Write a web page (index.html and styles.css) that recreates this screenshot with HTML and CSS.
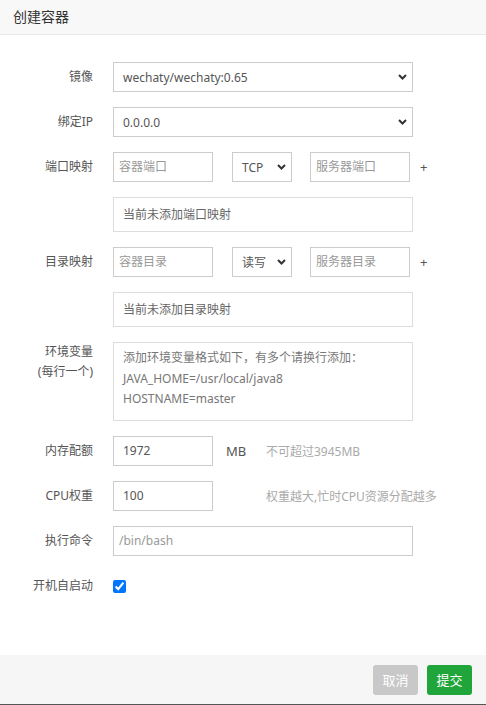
FILE: index.html
```html
<!DOCTYPE html>
<html lang="zh">
<head>
<meta charset="utf-8">
<title>创建容器</title>
<link rel="stylesheet" href="styles.css">
</head>
<body>
<div class="dialog">
  <div class="dialog-header">创建容器</div>
  <div class="dialog-body">
    <div class="row">
      <label class="label">镜像</label>
      <div class="select wide"><span>wechaty/wechaty:0.65</span><svg class="chev" width="9" height="6" viewBox="0 0 9 6"><path d="M1 1l3.5 3.5L8 1" fill="none" stroke="#333" stroke-width="2"/></svg></div>
    </div>
    <div class="row">
      <label class="label">绑定IP</label>
      <div class="select wide"><span>0.0.0.0</span><svg class="chev" width="9" height="6" viewBox="0 0 9 6"><path d="M1 1l3.5 3.5L8 1" fill="none" stroke="#333" stroke-width="2"/></svg></div>
    </div>
    <div class="row">
      <label class="label">端口映射</label>
      <div class="inline">
        <div class="input small placeholder">容器端口</div>
        <div class="select tiny"><span>TCP</span><svg class="chev" width="9" height="6" viewBox="0 0 9 6"><path d="M1 1l3.5 3.5L8 1" fill="none" stroke="#333" stroke-width="2"/></svg></div>
        <div class="input small placeholder">服务器端口</div>
        <span class="plus">+</span>
      </div>
    </div>
    <div class="row">
      <span class="label"></span>
      <div class="empty-box">当前未添加端口映射</div>
    </div>
    <div class="row">
      <label class="label">目录映射</label>
      <div class="inline">
        <div class="input small placeholder">容器目录</div>
        <div class="select tiny"><span>读写</span><svg class="chev" width="9" height="6" viewBox="0 0 9 6"><path d="M1 1l3.5 3.5L8 1" fill="none" stroke="#333" stroke-width="2"/></svg></div>
        <div class="input small placeholder">服务器目录</div>
        <span class="plus">+</span>
      </div>
    </div>
    <div class="row">
      <span class="label"></span>
      <div class="empty-box">当前未添加目录映射</div>
    </div>
    <div class="row top">
      <label class="label two">环境变量<br>(每行一个)</label>
      <div class="textarea">添加环境变量格式如下，有多个请换行添加：<br>JAVA_HOME=/usr/local/java8<br>HOSTNAME=master</div>
    </div>
    <div class="row">
      <label class="label">内存配额</label>
      <div class="inline">
        <div class="input small">1972</div>
        <span class="unit">MB</span>
        <span class="note">不可超过3945MB</span>
      </div>
    </div>
    <div class="row">
      <label class="label">CPU权重</label>
      <div class="inline">
        <div class="input small">100</div>
        <span class="unit"></span>
        <span class="note">权重越大,忙时CPU资源分配越多</span>
      </div>
    </div>
    <div class="row">
      <label class="label">执行命令</label>
      <div class="input wide placeholder">/bin/bash</div>
    </div>
    <div class="row check-row">
      <label class="label">开机自启动</label>
      <input class="check" type="checkbox" checked>
    </div>
  </div>
  <div class="dialog-footer">
    <button class="btn btn-cancel">取消</button>
    <button class="btn btn-submit">提交</button>
  </div>
</div>
</body>
</html>
```

FILE: styles.css
```css
html, body {
  margin: 0;
  padding: 0;
  background: #fff;
}
body {
  font-family: "Noto Sans", "Noto Sans CJK SC", sans-serif;
  font-size: 12px;
  color: #333;
}
.dialog {
  width: 486px;
  height: 705px;
  display: flex;
  flex-direction: column;
  box-sizing: border-box;
  border-bottom: 1px solid #555;
}
.dialog-header {
  height: 34px;
  line-height: 34px;
  padding-left: 13px;
  font-size: 14px;
  color: #333;
  background: #f8f8f8;
  border-bottom: 1px solid #e8e8e8;
  flex: none;
}
.dialog-body {
  flex: 1;
  padding-top: 27px;
  display: flex;
  flex-direction: column;
  gap: 15px;
}
.row {
  display: flex;
  align-items: center;
}
.row.top {
  align-items: flex-start;
}
.label {
  width: 93px;
  margin-right: 20px;
  text-align: right;
  color: #555;
  flex: none;
  line-height: 20px;
}
.label.two {
  padding-top: 0px;
}
.select, .input, .textarea, .empty-box {
  box-sizing: border-box;
  border: 1px solid #ccc;
  background: #fff;
  color: #555;
}
.select {
  height: 30px;
  display: flex;
  align-items: center;
  justify-content: space-between;
  padding: 0 5px 0 9px;
}
.select.wide {
  width: 300px;
  padding-right: 5px;
}
.select.tiny {
  width: 60px;
  margin-left: 19px;
  margin-right: 18px;
}
.chev {
  display: block;
}
.input {
  height: 30px;
  line-height: 28px;
  padding: 0 9px;
}
.input.small {
  width: 100px;
  padding-left: 5px;
}
.input.wide {
  width: 300px;
  padding-left: 5px;
}
.input.small:not(.placeholder) {
  padding-left: 9px;
}
.placeholder {
  color: #999;
}
.inline {
  display: flex;
  align-items: center;
}
.plus {
  margin-left: 10px;
  color: #555;
  font-size: 13px;
}
.empty-box {
  width: 300px;
  height: 35px;
  line-height: 33px;
  padding-left: 9px;
  border-color: #ddd;
  color: #666;
}
.textarea {
  width: 300px;
  height: 79px;
  padding: 5px 9px;
  line-height: 20.5px;
  color: #777;
  border-color: #ddd;
}
.unit {
  width: 40px;
  padding-left: 13px;
  color: #555;
  font-size: 13px;
}
.note {
  color: #aaa;
}
.check-row {
  height: 30px;
}
.check {
  margin: 0;
  width: 13px;
  height: 13px;
}
.dialog-footer {
  height: 49px;
  flex: none;
  background: #f5f6f5;
  display: flex;
  align-items: center;
  justify-content: flex-end;
  gap: 9px;
  padding-right: 14px;
}
.btn {
  font-family: inherit;
  font-size: 13px;
  color: #fff;
  border: 0;
  border-radius: 3px;
  width: 45px;
  height: 30px;
  padding: 0;
}
.btn-cancel {
  background: #c8c8c8;
}
.btn-submit {
  background: #20a53a;
}
```
